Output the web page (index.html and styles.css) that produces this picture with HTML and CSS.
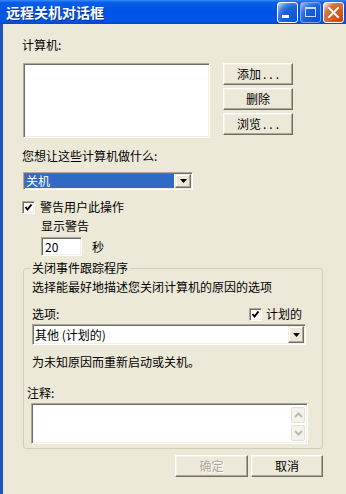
FILE: index.html
```html
<!DOCTYPE html>
<html lang="zh-CN">
<head>
<meta charset="utf-8">
<title>远程关机对话框</title>
<link rel="stylesheet" href="styles.css">
</head>
<body>
<div class="window">
  <div class="titlebar">
    <span class="title">远程关机对话框</span>
    <div class="controls">
      <span class="cbtn blue">
        <svg width="19" height="19" viewBox="0 0 19 19"><rect x="4" y="12" width="7" height="3" fill="#fff"/></svg>
      </span>
      <span class="cbtn blue disabled">
        <svg width="19" height="19" viewBox="0 0 19 19"><rect x="4.5" y="4.5" width="10" height="9" fill="none" stroke="#fff" stroke-width="1"/><rect x="4" y="4" width="11" height="2" fill="#fff"/></svg>
      </span>
      <span class="cbtn red">
        <svg width="19" height="19" viewBox="0 0 19 19"><path d="M5 5 L14 14 M14 5 L5 14" stroke="#fff" stroke-width="2" stroke-linecap="square"/></svg>
      </span>
    </div>
  </div>
  <div class="frame">
    <div class="label l-computers">计算机:</div>
    <div class="row-computers">
      <div class="listbox sunken"></div>
      <div class="btn-col">
        <button class="btn side">添加<span class="dots">...</span></button>
        <button class="btn side">删除</button>
        <button class="btn side">浏览<span class="dots">...</span></button>
      </div>
    </div>
    <div class="label l-what">您想让这些计算机做什么:</div>
    <div class="combo combo-action sunken">
      <span class="combo-text selected">关机</span>
      <span class="drop"><svg width="7" height="4" viewBox="0 0 7 4"><polygon points="0,0 7,0 3.5,4" fill="#000"/></svg></span>
    </div>
    <div class="check-row">
      <span class="checkbox sunken"><svg width="9" height="9" viewBox="0 0 9 9"><polyline points="1.5,4 3.5,6.5 7.5,1.5" fill="none" stroke="#000" stroke-width="2"/></svg></span>
      <span>警告用户此操作</span>
    </div>
    <div class="label l-warn">显示警告</div>
    <div class="row-seconds">
      <div class="textbox sunken">20</div>
      <span class="sec">秒</span>
    </div>
    <fieldset class="group">
      <legend>关闭事件跟踪程序</legend>
      <div class="label">选择能最好地描述您关闭计算机的原因的选项</div>
      <div class="opt-row">
        <span class="label">选项:</span>
        <span class="check-inline">
          <span class="checkbox sunken"><svg width="9" height="9" viewBox="0 0 9 9"><polyline points="1.5,4 3.5,6.5 7.5,1.5" fill="none" stroke="#000" stroke-width="2"/></svg></span>
          <span>计划的</span>
        </span>
      </div>
      <div class="combo combo-reason sunken">
        <span class="combo-text">其他 (计划的)</span>
        <span class="drop"><svg width="7" height="4" viewBox="0 0 7 4"><polygon points="0,0 7,0 3.5,4" fill="#000"/></svg></span>
      </div>
      <div class="label l-note">为未知原因而重新启动或关机。</div>
      <div class="label l-comment">注释:</div>
      <div class="memo sunken">
        <div class="memo-text"></div>
        <div class="scroll">
          <span class="sarrow"><svg width="9" height="6" viewBox="0 0 9 6"><polyline points="1,5 4.5,1.5 8,5" fill="none" stroke="#BDBBAE" stroke-width="2"/></svg></span>
          <span class="sarrow"><svg width="9" height="6" viewBox="0 0 9 6"><polyline points="1,1 4.5,4.5 8,1" fill="none" stroke="#BDBBAE" stroke-width="2"/></svg></span>
        </div>
      </div>
    </fieldset>
    <div class="actions">
      <button class="btn action" disabled>确定</button>
      <button class="btn action">取消</button>
    </div>
  </div>
</div>
</body>
</html>
```
FILE: styles.css
```css
* { box-sizing: border-box; }
html, body { margin: 0; padding: 0; }
body {
  width: 346px;
  height: 494px;
  overflow: hidden;
  background: #ECE9D8;
  font-family: "Noto Sans CJK SC", "Noto Sans", sans-serif;
  font-size: 12px;
  color: #000;
}
.window {
  width: 346px;
  height: 494px;
  display: flex;
  flex-direction: column;
}
.titlebar {
  flex: none;
  height: 24px;
  display: flex;
  align-items: center;
  padding: 0 2px 0 6px;
  background: linear-gradient(to bottom, #3A8CF8 0%, #0A5EEA 10%, #0054E6 45%, #0058EA 85%, #0046CC 100%);
}
.title {
  flex: 1;
  color: #fff;
  font-weight: bold;
  font-size: 14px;
  line-height: 16px;
  text-shadow: 1px 1px 0 #0A2C8C;
}
.controls {
  display: flex;
  gap: 2px;
}
.cbtn {
  width: 21px;
  height: 21px;
  border: 1px solid #fff;
  border-radius: 3px;
  display: flex;
}
.cbtn.blue {
  background: radial-gradient(circle at 90% 90%, #0054E9 0%, #2263D5 55%, #4479E4 70%, #A3BBEC 90%, #fff 100%);
}
.cbtn.blue.disabled {
  border-color: #9DB8EE;
  opacity: 0.8;
}
.cbtn.red {
  background: radial-gradient(circle at 90% 90%, #CC4600 0%, #DC6527 55%, #CD7546 70%, #FFCCB2 90%, #fff 100%);
}
.frame {
  flex: 1;
  border-left: 3px solid #1B55BF;
  padding: 0 23px 0 19px;
  display: flex;
  flex-direction: column;
  align-items: flex-start;
}
.label {
  line-height: 14px;
  white-space: nowrap;
}
.sunken {
  background: #fff;
  border: 1px solid;
  border-color: #ACA899 #fff #fff #ACA899;
  box-shadow: inset 1px 1px 0 #716F64, inset -1px -1px 0 #F1EFE2;
}
.btn {
  font: inherit;
  font-size: 12px;
  line-height: 14px;
  color: #000;
  background: #ECE9D8;
  border: 1px solid;
  border-color: #fff #716F64 #716F64 #fff;
  box-shadow: inset -1px -1px 0 #ACA899, inset 1px 1px 0 #F4F2E8;
  padding: 0;
  margin: 0;
  border-radius: 0;
}
.btn:disabled {
  color: #ACA899;
  text-shadow: 1px 1px 0 #fff;
}
.dots {
  letter-spacing: 3px;
  margin-left: 2px;
  margin-right: -3px;
}
.l-computers { margin-top: 14px; }
.row-computers {
  margin-top: 11px;
  display: flex;
  align-items: flex-start;
}
.listbox {
  margin-left: 1px;
  width: 187px;
  height: 75px;
}
.btn-col {
  margin-left: 13px;
  display: flex;
  flex-direction: column;
  gap: 3px;
}
.btn.side {
  width: 70px;
  height: 22px;
}
.l-what { margin-top: 11px; }
.combo {
  display: flex;
  padding: 1px;
}
.combo-action {
  margin-top: 9px;
  margin-left: 1px;
  width: 170px;
  height: 18px;
}
.combo-text {
  flex: 1;
  line-height: 14px;
  padding-left: 1px;
  margin-right: 1px;
  white-space: nowrap;
}
.combo-text.selected {
  background: #316AC5;
  color: #fff;
}
.drop {
  width: 16px;
  display: flex;
  align-items: center;
  justify-content: center;
  background: #ECE9D8;
  border: 1px solid;
  border-color: #F1EFE2 #716F64 #716F64 #F1EFE2;
  box-shadow: inset -1px -1px 0 #ACA899, inset 1px 1px 0 #fff;
}
.check-row {
  margin-top: 10px;
  height: 14px;
  display: flex;
  align-items: center;
  gap: 5px;
  line-height: 14px;
}
.checkbox {
  width: 13px;
  height: 13px;
  display: flex;
  align-items: center;
  justify-content: center;
  flex: none;
}
.l-warn {
  margin-top: 5px;
  margin-left: 19px;
}
.row-seconds {
  margin-top: 4px;
  display: flex;
  align-items: center;
}
.textbox {
  margin-left: 19px;
  width: 41px;
  height: 19px;
  padding: 1px 3px;
  line-height: 15px;
}
.sec {
  margin-left: 10px;
  line-height: 14px;
}
.group {
  margin: 5px 0 0 1px;
  align-self: stretch;
  min-inline-size: 0;
  border: 1px solid #D0D0BF;
  border-radius: 3px;
  padding: 5px 8px 4px 8px;
}
.group legend {
  padding: 0 2px;
  margin-left: -2px;
  line-height: 14px;
  font-size: 12px;
}
.opt-row {
  margin-top: 13px;
  height: 14px;
  display: flex;
  align-items: center;
}
.check-inline {
  margin-left: auto;
  margin-right: 12px;
  display: flex;
  align-items: center;
  gap: 4px;
  line-height: 14px;
}
.combo-reason {
  margin-top: 3px;
  width: 274px;
  height: 21px;
}
.combo-reason .combo-text {
  line-height: 17px;
  padding-left: 1px;
}
.l-note { margin-top: 10px; }
.l-comment {
  margin-top: 17px;
  margin-left: -5px;
}
.memo {
  margin-top: 3px;
  margin-left: -1px;
  width: 277px;
  height: 41px;
  display: flex;
  padding: 1px;
}
.memo-text { flex: 1; }
.scroll {
  width: 16px;
  display: flex;
  flex-direction: column;
  gap: 2px;
  padding: 2px 1px 1px 1px;
}
.sarrow {
  flex: 1;
  display: flex;
  align-items: center;
  justify-content: center;
  background: #F5F4EC;
  border: 1px solid #E3E1D6;
  border-radius: 2px;
}
.actions {
  margin-top: 6px;
  align-self: stretch;
  display: flex;
  justify-content: flex-end;
  gap: 3px;
}
.btn.action {
  width: 73px;
  height: 22px;
}
.btn.action:last-child { width: 72px; }
```
